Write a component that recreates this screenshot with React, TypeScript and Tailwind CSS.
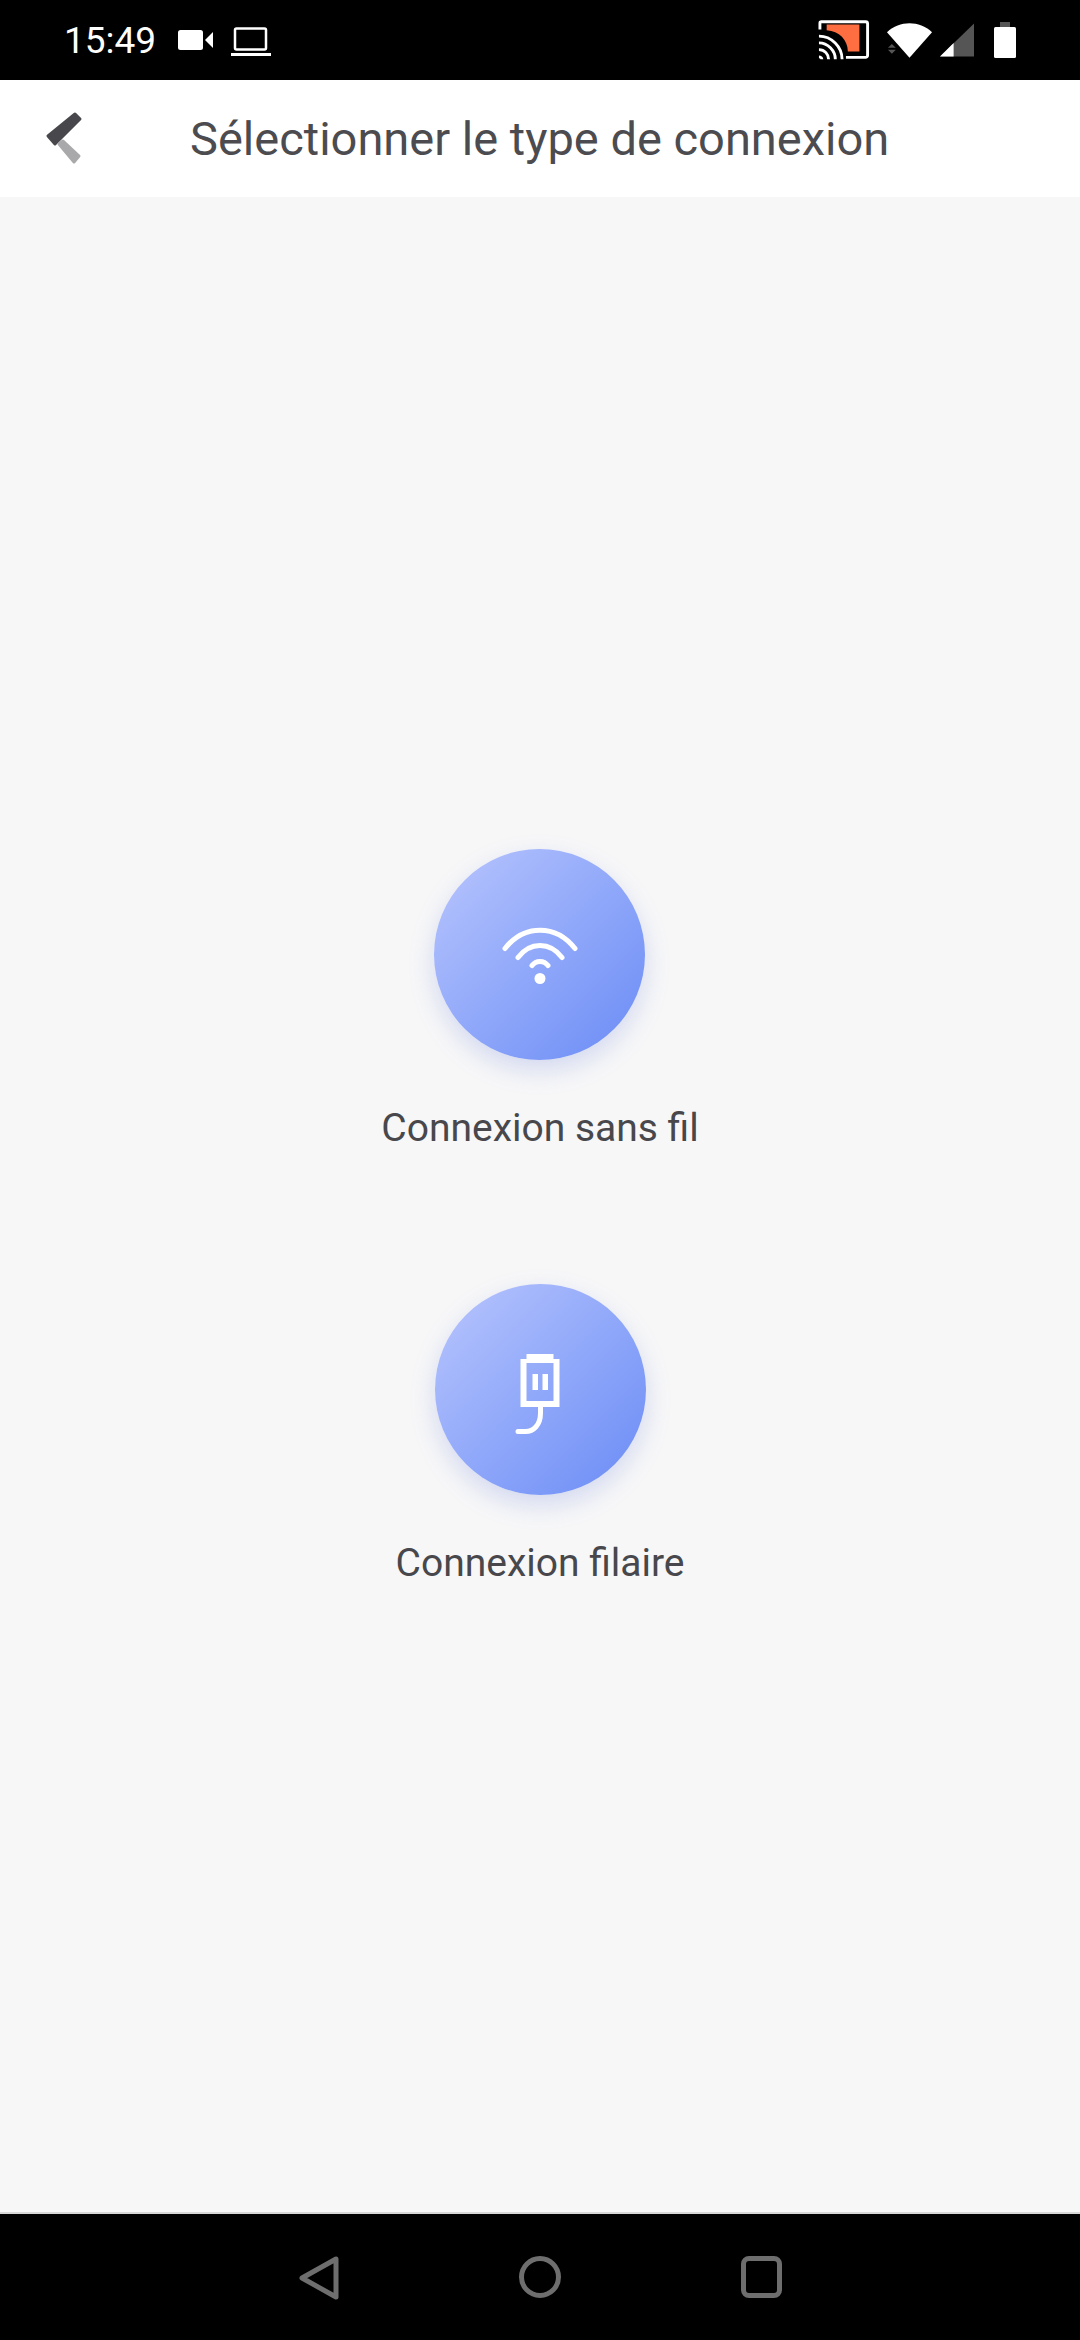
import React from 'react'

const font = { fontFamily: 'Roboto, sans-serif' }

function CastIcon() {
  return (
    <svg width="52" height="42" viewBox="0 0 54 42" fill="none">
      <path d="M9 5h34v28H31c0-12-9-21-22-22z" fill="#ff6e40" />
      <path d="M2 10V3.500C2 2.500 2.500 2 3.500 2h46c1 0 2 .5 2 2v33c0 1-1 2-2 2H29" stroke="#fff" strokeWidth="3" />
      <path d="M1 38.500c1.500 0 3 1.500 3 2.500M1 31c6 0 10 5 10 10M1 24c9 0 17 8 17 17M1 17c13 0 24 11 24 24" stroke="#fff" strokeWidth="3" />
    </svg>
  )
}

function StatusBar() {
  return (
    <div className="flex h-20 items-center bg-black pl-[64px] text-white" style={font}>
      <span className="w-[90px] text-[37px] leading-none">15:49</span>
      <svg className="ml-6" width="36" height="20" viewBox="0 0 36 20" fill="#fff">
        <rect x="0" y="0" width="25" height="20" rx="2.500" />
        <path d="M27 10l8-8v16z" />
      </svg>
      <svg className="ml-[17px] mt-1" width="40" height="30" viewBox="0 0 40 30" fill="none" stroke="#fff" strokeWidth="2.500">
        <rect x="4" y="1.500" width="31" height="21" rx="1.500" />
        <path d="M0 27.500h40" strokeWidth="3" />
      </svg>
      <div className="ml-[547px] flex items-center">
        <CastIcon />
        <svg className="ml-4" width="47" height="36" viewBox="0 0 48 36" fill="#fff">
          <path d="M24 36L1 10C14-2 34-2 47 10z" />
          <path d="M2 26l4-4 4 4zM2 28l4 4 4-4z" fill="#555" />
        </svg>
        <svg className="ml-[7px]" width="35" height="34" viewBox="0 0 36 34">
          <path d="M35 0v34H0z" fill="#555" />
          <path d="M14 20v14H0z" fill="#fff" />
        </svg>
        <svg className="ml-[19px]" width="22" height="36" viewBox="0 0 22 36">
          <rect x="6" y="0" width="10" height="6" fill="#555" />
          <rect x="0" y="5" width="22" height="31" rx="1.500" fill="#fff" />
        </svg>
      </div>
    </div>
  )
}

function BackIcon() {
  return (
    <svg width="44" height="58" viewBox="0 0 44 58" strokeLinejoin="round" strokeWidth="3">
      <path d="M33 4l5 5-25 25-7-8z" fill="#48484c" stroke="#48484c" />
      <path d="M17 34l4-3 16 15-5 6z" fill="#a9a9ab" stroke="#a9a9ab" />
    </svg>
  )
}

function WifiIcon() {
  return (
    <svg width="76" height="60" viewBox="0 0 76 60" fill="none" stroke="#fff" strokeWidth="5" strokeLinecap="round">
      <path d="M3 23.500C22-1 54-1 73 23.500" />
      <path d="M16 32.500C28 16.500 48 16.500 60 32.500" />
      <path d="M30 40.500C34 35 42 35 46 40.500" />
      <circle cx="38" cy="53.500" r="5.500" fill="#fff" stroke="none" />
    </svg>
  )
}

function CableIcon() {
  return (
    <svg width="50" height="90" viewBox="0 0 50 90" fill="none" stroke="#fff" strokeLinecap="round">
      <path d="M11.500 9h27v5h6v48h-39V14h6zM11.500 18v38h27V18z" fill="#fff" fillRule="evenodd" stroke="none" />
      <rect x="17.500" y="29" width="5.500" height="16" fill="#fff" stroke="none" />
      <rect x="27.500" y="29" width="5.500" height="16" fill="#fff" stroke="none" />
      <path d="M25.500 62v6c0 12-7 18.500-15 18.500H3" strokeWidth="5" />
    </svg>
  )
}

function Option({ label, children }: { label: string; children: React.ReactNode }) {
  return (
    <div className="flex flex-col items-center">
      <div className="flex h-[211px] w-[211px] items-center justify-center rounded-full bg-gradient-to-br from-[#b9c5fd] to-[#6a8bf5] shadow-[0_10px_24px_rgba(120,140,220,0.28)]">
        {children}
      </div>
      <span className="mt-[44px] text-[39px] leading-[48px] text-[#48484c]">{label}</span>
    </div>
  )
}

function NavBar() {
  return (
    <div className="flex h-[128px] items-start justify-center gap-[180px] border-t-2 border-[#d8d8d8] bg-black pt-[42px]">
      <svg width="40" height="44" viewBox="0 0 40 44" fill="none" stroke="#6e6e6e" strokeWidth="5" strokeLinejoin="round">
        <path d="M37 3v38L3 22z" />
      </svg>
      <div className="h-[42px] w-[42px] rounded-full border-[5px] border-[#6e6e6e]" />
      <div className="h-[42px] w-[41px] rounded-[8px] border-[5px] border-[#6e6e6e]" />
    </div>
  )
}

export default function App() {
  return (
    <div className="flex h-[2340px] w-[1080px] flex-col bg-[#f7f7f8]" style={font}>
      <StatusBar />
      {/* Header */}
      <div className="flex h-[117px] items-center bg-white pl-[42px]">
        <BackIcon />
        <h1 className="ml-[104px] text-[47px] leading-none font-normal text-[#4c4c50]">Sélectionner le type de connexion</h1>
      </div>

      <div className="flex flex-1 flex-col items-center gap-[132px] pt-[652px]">
        <Option label="Connexion sans fil"><WifiIcon /></Option>
        <Option label="Connexion filaire"><CableIcon /></Option>
      </div>

      <NavBar />
    </div>
  )
}
